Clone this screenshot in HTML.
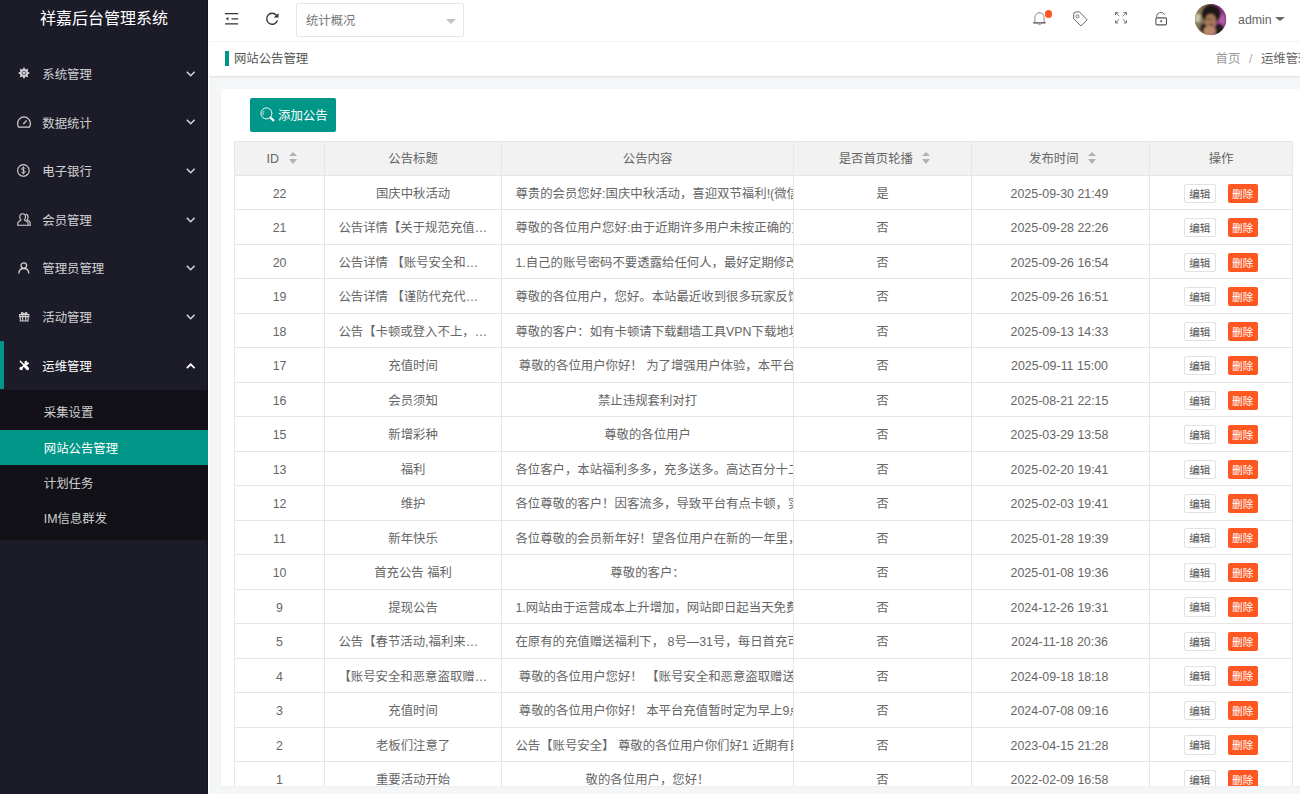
<!DOCTYPE html>
<html lang="zh-CN">
<head>
<meta charset="utf-8">
<title>祥嘉后台管理系统</title>
<style>
*{box-sizing:border-box;margin:0;padding:0}
html,body{width:1300px;height:794px;overflow:hidden}
body{position:relative;background:#f5f6f8;font-family:"Liberation Sans","Noto Sans CJK SC",sans-serif;font-size:12.4px;color:#666;-webkit-font-smoothing:antialiased}
a{text-decoration:none;color:inherit}
svg{display:block;position:absolute;overflow:visible}
/* sidebar */
#side{position:absolute;left:0;top:0;width:208px;height:794px;background:#1c1c28;box-shadow:inset -1px 0 0 rgba(0,0,10,.3),1.3px 0 0 #fff;z-index:5}
#logo{position:absolute;left:0;top:1px;width:208px;height:36px;line-height:35px;text-align:center;color:#fff;font-size:16px;letter-spacing:0}
.mi{position:absolute;left:0;width:208px;height:48.6px;line-height:48.6px;color:rgba(255,255,255,.8)}
.mi span{position:absolute;left:42.3px;top:1.7px;white-space:nowrap}
.mi.on{color:#fff}
.mi.on:before{content:"";position:absolute;left:0;top:0;width:4px;height:100%;background:#009688}
#sub{position:absolute;left:0;top:389.6px;width:208px;height:150px;background:#111117}
.si{position:absolute;left:0;width:208px;height:35.4px;line-height:35.4px;padding:2.2px 0 0 43.8px;overflow:hidden;color:rgba(255,255,255,.8);white-space:nowrap}
.si.on{background:#009688;color:#fff}
/* header */
#head{position:absolute;left:208px;top:0;width:1092px;height:41.5px;background:#fff;border-bottom:1px solid #f3f3f3}
#sel{position:absolute;left:88.3px;top:3px;width:167.6px;height:34px;border:1px solid #e6e6e6;border-radius:2px;background:#fff;line-height:33px;padding:1.4px 0 0 8.6px;color:#777}
#sel:after{content:"";position:absolute;left:148.4px;top:14.6px;border:5px solid transparent;border-top:5px solid #c2c2c2;border-bottom:0}
#adm{position:absolute;left:1030px;top:0;height:41px;line-height:40px;color:#666}
#adm:after{content:"";position:absolute;left:36.8px;top:16.9px;border:5px solid transparent;border-top:4.6px solid #666;border-bottom:0}
#ava{left:986.7px;top:4px}
#dot{position:absolute;left:837.05px;top:10.45px;width:7.3px;height:7.3px;border-radius:50%;background:#ff5722}
/* crumb */
#crumb{position:absolute;left:208px;top:41.5px;width:1092px;height:34.4px;background:#fff;box-shadow:0 1px 2px rgba(0,0,0,.1);line-height:34px}
#crumb i{position:absolute;left:17.3px;top:9.5px;width:3.7px;height:14.5px;background:#009688}
#crumb b{position:absolute;left:25.9px;top:.5px;font-weight:normal;color:#555;white-space:nowrap}
#crumb em{position:absolute;left:1007.5px;top:.5px;font-style:normal;white-space:nowrap;color:#666}
#crumb em u{text-decoration:none;color:#999}
#crumb em s{text-decoration:none;color:#aaa;margin:0 8.6px}
/* card */
#card{overflow:hidden;position:absolute;left:221px;top:89px;width:1100px;height:697px;background:#fff;border-radius:2px;box-shadow:0 1px 2px rgba(0,0,0,.04)}
#add{position:absolute;left:29px;top:9.2px;width:85.8px;height:33.6px;background:#009688;border-radius:2px;color:#fff;line-height:33px;white-space:nowrap}
#add span{position:absolute;left:28px;top:2px}
#tbl{position:absolute;left:13px;top:51.7px;width:1059px;height:660px;color:#666}
.tr{position:absolute;left:0;width:1059px;height:34.49px;border-bottom:1px solid #e6e6e6}
.th{top:0;height:35.8px;background:#f2f2f2;border-top:1px solid #e6e6e6}
.c{position:absolute;top:0;height:100%;border-right:1px solid #e6e6e6;text-align:center;white-space:nowrap;overflow:hidden;padding:2px 13.3px 0;line-height:33.4px}
.th .c{line-height:32.8px;padding-top:1.2px}
.c1{left:0;width:91.1px;border-left:1px solid #e6e6e6}
.c2{left:91.1px;width:177px}
.el{text-align:left}
.c3{left:268.1px;width:291.9px}
.c4{left:560px;width:178.1px}
.c5{left:738.1px;width:178px;padding-right:15.5px}
.c6{left:916.1px;width:142.9px;padding:2px 0 0}
.b1,.b2{position:absolute;top:7.6px;height:19.4px;line-height:18.4px;font-size:10.6px;border-radius:2px;text-align:center}
.b1{left:33.6px;width:32.2px;border:1px solid #e2e2e2;color:#555;background:#fff;line-height:19.4px}
.b2{left:77.5px;width:30.2px;background:#ff5722;color:#fff;line-height:20px}
.th .st{padding-left:18.3px;padding-right:13.3px}
.so{display:inline-block;position:relative;width:9px;height:12px;margin-left:9.5px;vertical-align:-2px}
.so:before{content:"";position:absolute;left:0;top:-.4px;border:4.6px solid transparent;border-bottom:4.9px solid #b2b2b2;border-top:0}
.so:after{content:"";position:absolute;left:0;top:6.5px;border:4.6px solid transparent;border-top:5px solid #b2b2b2;border-bottom:0}
</style>
</head>
<body>
<div id="side">
  <div id="logo">祥嘉后台管理系统</div>
  <div class="mi" style="top:49.3px"><svg style="left:17.8px;top:18.1px" width="12" height="12" viewBox="0 0 12 12"><polygon fill="#d2d2d4" points="6.00,0.00 7.49,2.40 10.24,1.76 9.60,4.51 12.00,6.00 9.60,7.49 10.24,10.24 7.49,9.60 6.00,12.00 4.51,9.60 1.76,10.24 2.40,7.49 0.00,6.00 2.40,4.51 1.76,1.76 4.51,2.40"/><circle cx="6" cy="6" r="1.800" fill="none" stroke="#2a2a36" stroke-width=".7"/></svg><span>系统管理</span><svg style="left:185.6px;top:21.6px" width="9.4" height="6" viewBox="0 0 9.4 6"><path d="M.8 .8L4.700 4.700 8.600 .8" fill="none" stroke="#d2d2d4" stroke-width="1.600"/></svg></div>
  <div class="mi" style="top:97.9px"><svg style="left:17px;top:18px" width="14" height="12" viewBox="0 0 14 12"><path d="M1.600 11.200C.9 10 .6 8.800 .6 7.600.6 3.900 3.500 .9 7 .9s6.400 3 6.400 6.700c0 1.200-.3 2.400-1 3.600z" fill="none" stroke="#d2d2d4" stroke-width="1.200"/><path d="M6.300 8.200L9.600 4.300" stroke="#d2d2d4" stroke-width="1.300" fill="none"/></svg><span>数据统计</span><svg style="left:185.6px;top:21.6px" width="9.4" height="6" viewBox="0 0 9.4 6"><path d="M.8 .8L4.700 4.700 8.600 .8" fill="none" stroke="#d2d2d4" stroke-width="1.600"/></svg></div>
  <div class="mi" style="top:146.5px"><svg style="left:17.4px;top:17.8px" width="12.800" height="12.800" viewBox="0 0 12.800 12.800"><circle cx="6.400" cy="6.400" r="5.800" fill="none" stroke="#d2d2d4" stroke-width="1.100"/><path d="M8.200 4.700C7.900 3.900 7.200 3.600 6.400 3.600 5.400 3.600 4.700 4.100 4.700 4.900c0 1.900 3.500 1 3.500 2.900 0 .8-.8 1.300-1.800 1.300-.9 0-1.700-.4-1.900-1.200M6.400 2.500v7.800" fill="none" stroke="#d2d2d4" stroke-width=".95"/></svg><span>电子银行</span><svg style="left:185.6px;top:21.6px" width="9.4" height="6" viewBox="0 0 9.4 6"><path d="M.8 .8L4.700 4.700 8.600 .8" fill="none" stroke="#d2d2d4" stroke-width="1.600"/></svg></div>
  <div class="mi" style="top:195.1px"><svg style="left:17px;top:17.6px" width="14" height="13" viewBox="0 0 14 13"><path d="M5.600 .7c1.700 0 2.900 1.300 2.900 3.200 0 1.300-.5 2.400-1.300 3 .2.700 3 1.200 3.600 2.600.3.700.4 1.400.4 2.800H.7c0-1.400 0-2.100.3-2.800C1.600 8.100 3.900 7.600 4.100 6.900 3.300 6.300 2.800 5.200 2.800 3.900 2.800 2 4 .7 5.600 .7z" fill="none" stroke="#d2d2d4" stroke-width="1.100"/><path d="M8.600 1.100c1.500.2 2.500 1.400 2.500 3.100 0 1.200-.4 2.100-1.100 2.700.3.600 2.300 1 2.900 2.200.3.600.4 1.500.4 3.200h-2" fill="none" stroke="#d2d2d4" stroke-width="1.100"/></svg><span>会员管理</span><svg style="left:185.6px;top:21.6px" width="9.4" height="6" viewBox="0 0 9.4 6"><path d="M.8 .8L4.700 4.700 8.600 .8" fill="none" stroke="#d2d2d4" stroke-width="1.600"/></svg></div>
  <div class="mi" style="top:243.7px"><svg style="left:18.4px;top:18.2px" width="11.600" height="12" viewBox="0 0 11.600 12"><circle cx="5.800" cy="3.600" r="2.800" fill="none" stroke="#d2d2d4" stroke-width="1.300"/><path d="M.8 11.600C.9 8.600 2.800 6.500 5.800 6.500s4.900 2.100 5 5.100" fill="none" stroke="#d2d2d4" stroke-width="1.300"/></svg><span>管理员管理</span><svg style="left:185.6px;top:21.6px" width="9.4" height="6" viewBox="0 0 9.4 6"><path d="M.8 .8L4.700 4.700 8.600 .8" fill="none" stroke="#d2d2d4" stroke-width="1.600"/></svg></div>
  <div class="mi" style="top:292.3px"><svg style="left:18.800px;top:19.6px" width="10.400" height="9.6" viewBox="0 0 10.400 9.6"><path d="M.6 2.600h9.200v2H.6zM1.300 4.600h7.800v4.400H1.300zM3.700 2.600v6.400M6.700 2.600v6.400M3.700 2.400C2.400 2.400 1.900 .7 3 .6 4 .5 4.700 1.600 5.200 2.400 5.700 1.600 6.400 .5 7.400 .6 8.500 .7 8 2.400 6.700 2.400" fill="none" stroke="#d2d2d4" stroke-width="1.100"/></svg><span>活动管理</span><svg style="left:185.6px;top:21.6px" width="9.4" height="6" viewBox="0 0 9.4 6"><path d="M.8 .8L4.700 4.700 8.600 .8" fill="none" stroke="#d2d2d4" stroke-width="1.600"/></svg></div>
  <div class="mi on" style="top:340.9px"><svg style="left:18.6px;top:18.9px" width="10.600" height="10.600" viewBox="0 0 10.600 10.600"><path d="M1.300 1.300L5.600 5.600" stroke="#fff" stroke-width="1.500" stroke-linecap="round" fill="none"/><path d="M5.900 5.900L8.600 8.600" stroke="#fff" stroke-width="3" stroke-linecap="round" fill="none"/><path d="M1.900 8.700L7 3.600" stroke="#fff" stroke-width="1.500" fill="none"/><circle cx="2.100" cy="8.500" r="1.700" fill="#fff"/><path d="M6.100 1.100L8.200 0.700 7.600 2.600 9.700 2.300 9.900 3.800 8 5.200 5.900 4.200 5.400 2.400z" fill="#fff"/></svg><span>运维管理</span><svg style="left:185.6px;top:22.2px" width="9.4" height="6" viewBox="0 0 9.4 6"><path d="M.8 5.200L4.700 1.300 8.600 5.200" fill="none" stroke="#fff" stroke-width="1.700"/></svg></div>
  <div id="sub">
    <div class="si" style="top:4.4px">采集设置</div>
    <div class="si on" style="top:40.3px;height:35.2px">网站公告管理</div>
    <div class="si" style="top:75.2px">计划任务</div>
    <div class="si" style="top:110.6px">IM信息群发</div>
  </div>
</div>
<div id="head">
  <svg style="left:16.800px;top:12.65px" width="13.200" height="11.600" viewBox="0 0 13.200 11.600"><path d="M0 .7h13.200M6.400 5.850h6.800M0 10.900h13.200" stroke="#333" stroke-width="1.250" fill="none"/><path d="M3.400 4.100v3.500L.8 5.850z" fill="#333"/></svg>
  <svg style="left:58.200px;top:11.800px" width="13" height="13.400" viewBox="0 0 13 13.400"><path d="M11.460 8.410A5.500 5.500 0 1 1 10.410 3.270" fill="none" stroke="#333" stroke-width="1.400"/><path d="M12.500 1.300v4.200H7.700z" fill="#333"/></svg>
  <div id="sel">统计概况</div>
  <!-- bell -->
  <svg style="left:824.600px;top:11.600px" width="12.800" height="13.600" viewBox="0 0 12.800 13.600"><path d="M1.900 10.900V5.400C1.900 2.600 3.900 .8 6.500 .8s4.600 1.800 4.600 4.600v5.500" fill="none" stroke="#8a8a8a" stroke-width="1"/><path d="M4.600 11.600c.3 1.400 3.500 1.400 3.800 0" fill="none" stroke="#999" stroke-width=".9"/><path d="M.2 10.900h12.400" stroke="#333" stroke-width="1.100" fill="none"/><path d="M6.500 .8V.2" stroke="#8a8a8a" stroke-width="1" fill="none"/></svg>
  <div id="dot"></div>
  <!-- tag -->
  <svg style="left:864.600px;top:10.600px" width="14.800" height="15.400" viewBox="0 0 14.800 15.400"><path d="M.87 1.900L1.300 1.400 6.250 .67 14.200 8.750 7.900 14.900 .5 7.500z" fill="none" stroke="#666" stroke-width="1" stroke-linejoin="round"/><circle cx="4.500" cy="5.350" r="1.500" fill="none" stroke="#666" stroke-width=".9"/></svg>
  <!-- fullscreen -->
  <svg style="left:906.6px;top:12.4px" width="12" height="11.400" viewBox="0 0 12 11.400"><path d="M.5 3.200V.5h2.800M8.700 .5h2.800v2.700M11.500 8.200v2.700H8.700M3.300 10.900H.5V8.200M.7 .7l3.600 3.400M11.300 .7L7.700 4.100M11.300 10.700L7.700 7.300M.7 10.700l3.600-3.400" fill="none" stroke="#666" stroke-width=".9"/></svg>
  <!-- lock -->
  <svg style="left:947.200px;top:11.600px" width="12.400" height="13.400" viewBox="0 0 12.400 13.400"><rect x=".9" y="5.900" width="10.600" height="7" rx="1.100" fill="none" stroke="#555" stroke-width="1.100"/><path d="M1.500 5.800V4.900A4.300 4.300 0 0 1 9.700 2.900" fill="none" stroke="#666" stroke-width="1"/><path d="M6.100 8v2.200" stroke="#444" stroke-width="1.300" fill="none"/></svg>
  <svg id="ava" width="31.200" height="31.200" viewBox="0 0 100 100"><defs><clipPath id="cp"><circle cx="50" cy="50" r="50"/></clipPath><filter id="bl" x="-20%" y="-20%" width="140%" height="140%"><feGaussianBlur stdDeviation="3"/></filter></defs><g clip-path="url(#cp)"><rect width="100" height="100" fill="#7d6f50"/><g filter="url(#bl)"><rect x="-5" y="-5" width="40" height="110" fill="#84775a"/><rect x="52" y="-5" width="55" height="110" fill="#8e3585"/><ellipse cx="8" cy="45" rx="10" ry="14" fill="#c9c3a8"/><ellipse cx="86" cy="52" rx="10" ry="20" fill="#b060a8"/><ellipse cx="52" cy="32" rx="31" ry="30" fill="#1d1514"/><ellipse cx="30" cy="78" rx="14" ry="16" fill="#2a2220"/><ellipse cx="78" cy="82" rx="14" ry="20" fill="#231a1c"/><ellipse cx="50" cy="55" rx="18" ry="23" fill="#a9795a"/><ellipse cx="47" cy="86" rx="20" ry="15" fill="#b98a68"/><ellipse cx="52" cy="66" rx="6" ry="3" fill="#4a2f26"/><ellipse cx="46" cy="48" rx="12" ry="2.500" fill="#6a4636"/></g></g></svg>
  <div id="adm">admin</div>
</div>
<div id="crumb"><i></i><b>网站公告管理</b><em><u>首页</u><s>/</s>运维管理</em></div>
<div id="card">
  <a id="add"><svg style="left:9.6px;top:9.2px" width="16" height="16" viewBox="0 0 16 16"><circle cx="6.400" cy="6.400" r="5.500" fill="none" stroke="#fff" stroke-width="1"/><path d="M3.400 8A3.200 3.200 0 0 1 4.200 3.800" fill="none" stroke="#fff" stroke-width=".8"/><path d="M10.700 10.700l2.700 2.700" stroke="#fff" stroke-width="2.200" stroke-linecap="round" fill="none"/></svg><span>添加公告</span></a>
  <div id="tbl">
    <div class="tr th"><div class="c c1 st">ID<i class="so"></i></div><div class="c c2">公告标题</div><div class="c c3">公告内容</div><div class="c c4 st">是否首页轮播<i class="so"></i></div><div class="c c5 st">发布时间<i class="so"></i></div><div class="c c6">操作</div></div>
<div class="tr" style="top:35.30px"><div class="c c1">22</div><div class="c c2">国庆中秋活动</div><div class="c c3">尊贵的会员您好:国庆中秋活动，喜迎双节福利!(微信公众号同步)</div><div class="c c4">是</div><div class="c c5">2025-09-30 21:49</div><div class="c c6"><a class="b1">编辑</a><a class="b2">删除</a></div></div>
<div class="tr" style="top:69.79px"><div class="c c1">21</div><div class="c c2 el">公告详情【关于规范充值…</div><div class="c c3">尊敬的各位用户您好:由于近期许多用户未按正确的方式充值</div><div class="c c4">否</div><div class="c c5">2025-09-28 22:26</div><div class="c c6"><a class="b1">编辑</a><a class="b2">删除</a></div></div>
<div class="tr" style="top:104.28px"><div class="c c1">20</div><div class="c c2 el">公告详情 【账号安全和…</div><div class="c c3">1.自己的账号密码不要透露给任何人，最好定期修改密码</div><div class="c c4">否</div><div class="c c5">2025-09-26 16:54</div><div class="c c6"><a class="b1">编辑</a><a class="b2">删除</a></div></div>
<div class="tr" style="top:138.77px"><div class="c c1">19</div><div class="c c2 el">公告详情 【谨防代充代…</div><div class="c c3">尊敬的各位用户，您好。本站最近收到很多玩家反馈</div><div class="c c4">否</div><div class="c c5">2025-09-26 16:51</div><div class="c c6"><a class="b1">编辑</a><a class="b2">删除</a></div></div>
<div class="tr" style="top:173.26px"><div class="c c1">18</div><div class="c c2 el">公告【卡顿或登入不上，…</div><div class="c c3">尊敬的客户：如有卡顿请下载翻墙工具VPN下载地址</div><div class="c c4">否</div><div class="c c5">2025-09-13 14:33</div><div class="c c6"><a class="b1">编辑</a><a class="b2">删除</a></div></div>
<div class="tr" style="top:207.75px"><div class="c c1">17</div><div class="c c2">充值时间</div><div class="c c3">&nbsp;尊敬的各位用户你好！ 为了增强用户体验，本平台充值</div><div class="c c4">否</div><div class="c c5">2025-09-11 15:00</div><div class="c c6"><a class="b1">编辑</a><a class="b2">删除</a></div></div>
<div class="tr" style="top:242.24px"><div class="c c1">16</div><div class="c c2">会员须知</div><div class="c c3">禁止违规套利对打</div><div class="c c4">否</div><div class="c c5">2025-08-21 22:15</div><div class="c c6"><a class="b1">编辑</a><a class="b2">删除</a></div></div>
<div class="tr" style="top:276.73px"><div class="c c1">15</div><div class="c c2">新增彩种</div><div class="c c3">尊敬的各位用户</div><div class="c c4">否</div><div class="c c5">2025-03-29 13:58</div><div class="c c6"><a class="b1">编辑</a><a class="b2">删除</a></div></div>
<div class="tr" style="top:311.22px"><div class="c c1">13</div><div class="c c2">福利</div><div class="c c3">各位客户，本站福利多多，充多送多。高达百分十二</div><div class="c c4">否</div><div class="c c5">2025-02-20 19:41</div><div class="c c6"><a class="b1">编辑</a><a class="b2">删除</a></div></div>
<div class="tr" style="top:345.71px"><div class="c c1">12</div><div class="c c2">维护</div><div class="c c3">各位尊敬的客户！因客流多，导致平台有点卡顿，实在</div><div class="c c4">否</div><div class="c c5">2025-02-03 19:41</div><div class="c c6"><a class="b1">编辑</a><a class="b2">删除</a></div></div>
<div class="tr" style="top:380.20px"><div class="c c1">11</div><div class="c c2">新年快乐</div><div class="c c3">各位尊敬的会员新年好！望各位用户在新的一年里，</div><div class="c c4">否</div><div class="c c5">2025-01-28 19:39</div><div class="c c6"><a class="b1">编辑</a><a class="b2">删除</a></div></div>
<div class="tr" style="top:414.69px"><div class="c c1">10</div><div class="c c2">首充公告 福利</div><div class="c c3">尊敬的客户：</div><div class="c c4">否</div><div class="c c5">2025-01-08 19:36</div><div class="c c6"><a class="b1">编辑</a><a class="b2">删除</a></div></div>
<div class="tr" style="top:449.18px"><div class="c c1">9</div><div class="c c2">提现公告</div><div class="c c3">1.网站由于运营成本上升增加，网站即日起当天免费</div><div class="c c4">否</div><div class="c c5">2024-12-26 19:31</div><div class="c c6"><a class="b1">编辑</a><a class="b2">删除</a></div></div>
<div class="tr" style="top:483.67px"><div class="c c1">5</div><div class="c c2 el">公告【春节活动,福利来…</div><div class="c c3">在原有的充值赠送福利下， 8号—31号，每日首充可</div><div class="c c4">否</div><div class="c c5">2024-11-18 20:36</div><div class="c c6"><a class="b1">编辑</a><a class="b2">删除</a></div></div>
<div class="tr" style="top:518.16px"><div class="c c1">4</div><div class="c c2 el">【账号安全和恶意盗取赠…</div><div class="c c3">&nbsp;尊敬的各位用户您好！ 【账号安全和恶意盗取赠送</div><div class="c c4">否</div><div class="c c5">2024-09-18 18:18</div><div class="c c6"><a class="b1">编辑</a><a class="b2">删除</a></div></div>
<div class="tr" style="top:552.65px"><div class="c c1">3</div><div class="c c2">充值时间</div><div class="c c3">&nbsp;尊敬的各位用户你好！ 本平台充值暂时定为早上9点</div><div class="c c4">否</div><div class="c c5">2024-07-08 09:16</div><div class="c c6"><a class="b1">编辑</a><a class="b2">删除</a></div></div>
<div class="tr" style="top:587.14px"><div class="c c1">2</div><div class="c c2">老板们注意了</div><div class="c c3">公告【账号安全】 尊敬的各位用户你们好1 近期有目</div><div class="c c4">否</div><div class="c c5">2023-04-15 21:28</div><div class="c c6"><a class="b1">编辑</a><a class="b2">删除</a></div></div>
<div class="tr" style="top:621.63px"><div class="c c1">1</div><div class="c c2">重要活动开始</div><div class="c c3">敬的各位用户，您好！</div><div class="c c4">否</div><div class="c c5">2022-02-09 16:58</div><div class="c c6"><a class="b1">编辑</a><a class="b2">删除</a></div></div>
  </div>
</div>
</body>
</html>
